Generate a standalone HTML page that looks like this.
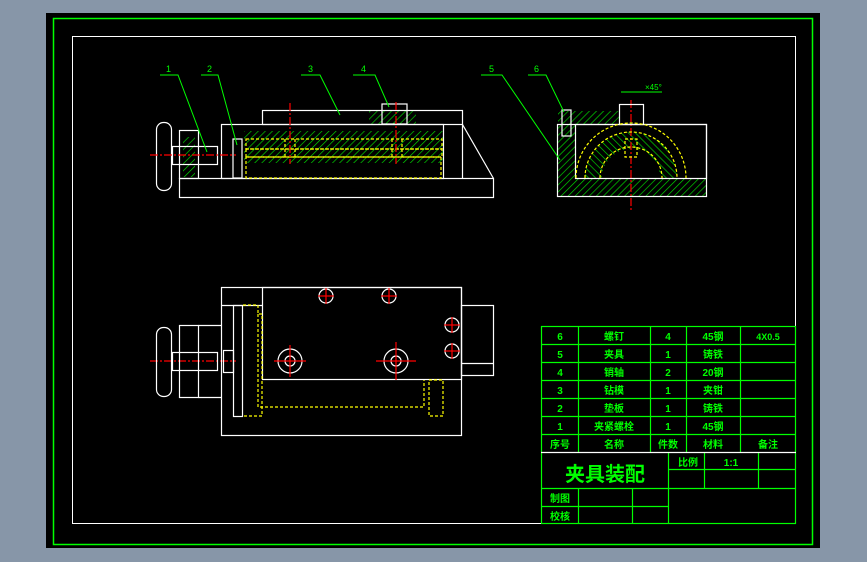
<!DOCTYPE html>
<html><head><meta charset="utf-8"><style>
html,body{margin:0;padding:0;background:#8796a8;width:867px;height:562px;overflow:hidden}
svg{position:absolute;left:0;top:0}
text{font-family:"Liberation Sans","Noto Sans CJK SC",sans-serif;fill:#00ff00}
</style></head><body>
<svg width="867" height="562" viewBox="0 0 867 562">
<defs>
<pattern id="h" width="5" height="5" patternUnits="userSpaceOnUse" patternTransform="rotate(45)"><line x1="0" y1="0" x2="0" y2="5" stroke="#00e000" stroke-width="1.3"/></pattern>
<pattern id="h2" width="5" height="5" patternUnits="userSpaceOnUse" patternTransform="rotate(-45)"><line x1="0" y1="0" x2="0" y2="5" stroke="#00e000" stroke-width="1.3"/></pattern>
</defs>
<rect x="46" y="13" width="774" height="535" fill="#000"/>
<rect x="53.5" y="18.5" width="759" height="526" fill="none" stroke="#00ff00" stroke-width="1.5"/>
<rect x="72.5" y="36.5" width="723" height="487" fill="none" stroke="#fff" stroke-width="1"/>
<rect x="244" y="131" width="200" height="32" fill="url(#h)"/>
<rect x="369" y="111" width="47" height="13" fill="url(#h)"/>
<rect x="183" y="137" width="12" height="40" fill="url(#h)"/>
<rect x="558" y="179" width="148" height="17" fill="url(#h)"/>
<rect x="558" y="111" width="17" height="68" fill="url(#h)"/>
<rect x="575" y="111" width="45" height="13" fill="url(#h)"/>
<path d="M585 178 A46 46 0 0 1 677 178 L660 178 A29 29 0 0 0 602 178Z" fill="url(#h2)"/>
<g fill="none" stroke="#fff" stroke-width="1.2">
<rect x="179.5" y="178.5" width="314" height="19"/>
<rect x="221.5" y="124.5" width="222" height="54"/>
<rect x="262.5" y="110.5" width="200" height="14"/>
<polyline points="462.5,124.5 493.5,178.5"/>
<line x1="462.5" y1="124.5" x2="462.5" y2="178.5"/>
<rect x="179.5" y="130.5" width="19" height="48"/>
<rect x="156.5" y="122.5" width="15" height="68" rx="7"/>
<rect x="172.5" y="146.5" width="45" height="18"/>
<rect x="233" y="139" width="9" height="39"/>
<rect x="382" y="104" width="25" height="20"/>
</g>
<g fill="none" stroke="#ffff00" stroke-width="1.2" stroke-dasharray="3,2">
<rect x="246" y="139" width="196" height="10"/>
<rect x="246" y="149" width="196" height="8"/>
<rect x="246" y="157" width="195" height="21"/>
<line x1="285" y1="139" x2="285" y2="157"/><line x1="295" y1="139" x2="295" y2="157"/>
<line x1="392" y1="139" x2="392" y2="157"/><line x1="402" y1="139" x2="402" y2="157"/>
</g>
<g stroke="#ff0000" stroke-width="1.2" stroke-dasharray="8,2,2,2">
<line x1="150" y1="155" x2="236" y2="155"/>
<line x1="290" y1="103" x2="290" y2="164"/>
<line x1="396" y1="102" x2="396" y2="164"/>
<line x1="631" y1="100" x2="631" y2="210"/>
<line x1="150" y1="361" x2="236" y2="361"/>
</g>
<g fill="none" stroke="#fff" stroke-width="1.2">
<rect x="557.5" y="124.5" width="149" height="72"/>
<rect x="575.5" y="124.5" width="131" height="54"/>
<rect x="619.5" y="104.5" width="24" height="20"/>
<rect x="562" y="110" width="9" height="26"/>
</g>
<g fill="none" stroke="#ffff00" stroke-width="1.2" stroke-dasharray="3,2">
<path d="M576 178 A55 55 0 0 1 686 178"/>
<path d="M585 178 A46 46 0 0 1 677 178"/>
<path d="M600 178 A31 31 0 0 1 662 178"/>
<rect x="625" y="139" width="12" height="18"/>
</g>
<g stroke="#00ff00" fill="none" stroke-width="1">
<polyline points="160,75 178,75 207,152"/>
<polyline points="201,75 218,75 237,145"/>
<polyline points="301,75 320,75 340,115"/>
<polyline points="353,75 375,75 389,107"/>
<polyline points="481,75 502,75 560,160"/>
<polyline points="528,75 546,75 564,112"/>
<polyline points="621,92 662,92"/>
</g>
<g font-size="9">
<text x="166" y="72">1</text><text x="207" y="72">2</text><text x="308" y="72">3</text><text x="361" y="72">4</text><text x="489" y="72">5</text><text x="534" y="72">6</text><text x="645" y="90" font-size="8">×45°</text>
</g>
<g fill="none" stroke="#fff" stroke-width="1.2">
<rect x="221.5" y="287.5" width="240" height="148"/>
<rect x="262.5" y="287.5" width="199" height="92"/>
<line x1="221.5" y1="305.5" x2="262.5" y2="305.5"/>
<rect x="461.5" y="305.5" width="32" height="70"/>
<line x1="461.5" y1="363.5" x2="493.5" y2="363.5"/>
<rect x="233.5" y="305.5" width="9" height="111"/>
<rect x="179.5" y="325.5" width="19" height="72"/>
<polyline points="198.5,325.5 221.5,325.5"/><polyline points="198.5,397.5 221.5,397.5"/>
<rect x="156.5" y="327.5" width="15" height="69" rx="7"/>
<rect x="172.5" y="352.5" width="45" height="18"/>
<rect x="223.5" y="350.5" width="10" height="22"/>
<circle cx="290" cy="361" r="12"/><circle cx="290" cy="361" r="5"/>
<circle cx="396" cy="361" r="12"/><circle cx="396" cy="361" r="5"/>
<circle cx="326" cy="296" r="7"/><circle cx="389" cy="296" r="7"/>
<circle cx="452" cy="325" r="7"/><circle cx="452" cy="351" r="7"/>
</g>
<g stroke="#ff0000" stroke-width="1.2">
<line x1="318" y1="296" x2="334" y2="296"/><line x1="326" y1="288" x2="326" y2="304"/>
<line x1="381" y1="296" x2="397" y2="296"/><line x1="389" y1="288" x2="389" y2="304"/>
<line x1="444" y1="325" x2="460" y2="325"/><line x1="452" y1="317" x2="452" y2="333"/>
<line x1="444" y1="351" x2="460" y2="351"/><line x1="452" y1="343" x2="452" y2="359"/>
<line x1="274" y1="361" x2="306" y2="361"/><line x1="290" y1="345" x2="290" y2="377"/>
<line x1="376" y1="361" x2="416" y2="361"/><line x1="396" y1="342" x2="396" y2="380"/>
</g>
<g fill="none" stroke="#ffff00" stroke-width="1.2" stroke-dasharray="3,2">
<polyline points="243,305 258,305 258,314 262,314 262,416 243,416"/>
<polyline points="258,314 258,407 424,407 424,380"/>
<rect x="429" y="380" width="14" height="36"/>
</g>
<g stroke="#00ff00" fill="none" stroke-width="1.2">
<rect x="541.5" y="326.5" width="254" height="197"/>
<line x1="541" y1="344.5" x2="796" y2="344.5"/><line x1="541" y1="362.5" x2="796" y2="362.5"/>
<line x1="541" y1="380.5" x2="796" y2="380.5"/><line x1="541" y1="398.5" x2="796" y2="398.5"/>
<line x1="541" y1="416.5" x2="796" y2="416.5"/><line x1="541" y1="434.5" x2="796" y2="434.5"/>
<line x1="578.5" y1="326" x2="578.5" y2="452"/><line x1="650.5" y1="326" x2="650.5" y2="452"/>
<line x1="686.5" y1="326" x2="686.5" y2="452"/><line x1="740.5" y1="326" x2="740.5" y2="452"/>
<line x1="668.5" y1="452" x2="668.5" y2="524"/><line x1="704.5" y1="452" x2="704.5" y2="488"/>
<line x1="758.5" y1="452" x2="758.5" y2="488"/>
<line x1="668" y1="469.5" x2="796" y2="469.5"/><line x1="541" y1="488.5" x2="796" y2="488.5"/>
<line x1="541" y1="506.5" x2="668" y2="506.5"/>
<line x1="578.5" y1="488" x2="578.5" y2="524"/><line x1="632.5" y1="488" x2="632.5" y2="524"/>
</g>
<line x1="541" y1="452.5" x2="796" y2="452.5" stroke="#fff" stroke-width="1.2"/>
<g font-size="10" text-anchor="middle" font-weight="bold">
<text x="560" y="340">6</text><text x="614" y="340">螺钉</text><text x="668" y="340">4</text><text x="713" y="340">45钢</text><text x="768" y="340" font-size="9">4X0.5</text>
<text x="560" y="358">5</text><text x="614" y="358">夹具</text><text x="668" y="358">1</text><text x="713" y="358">铸铁</text>
<text x="560" y="376">4</text><text x="614" y="376">销轴</text><text x="668" y="376">2</text><text x="713" y="376">20钢</text>
<text x="560" y="394">3</text><text x="614" y="394">钻模</text><text x="668" y="394">1</text><text x="713" y="394">夹钳</text>
<text x="560" y="412">2</text><text x="614" y="412">垫板</text><text x="668" y="412">1</text><text x="713" y="412">铸铁</text>
<text x="560" y="430">1</text><text x="614" y="430">夹紧螺栓</text><text x="668" y="430">1</text><text x="713" y="430">45钢</text>
<text x="560" y="448">序号</text><text x="614" y="448">名称</text><text x="668" y="448">件数</text><text x="713" y="448">材料</text><text x="768" y="448">备注</text>
<text x="605" y="481" font-size="20">夹具装配</text>
<text x="688" y="466">比例</text><text x="731" y="466">1:1</text>
<text x="560" y="502">制图</text><text x="560" y="520">校核</text>
</g>
</svg>
</body></html>
